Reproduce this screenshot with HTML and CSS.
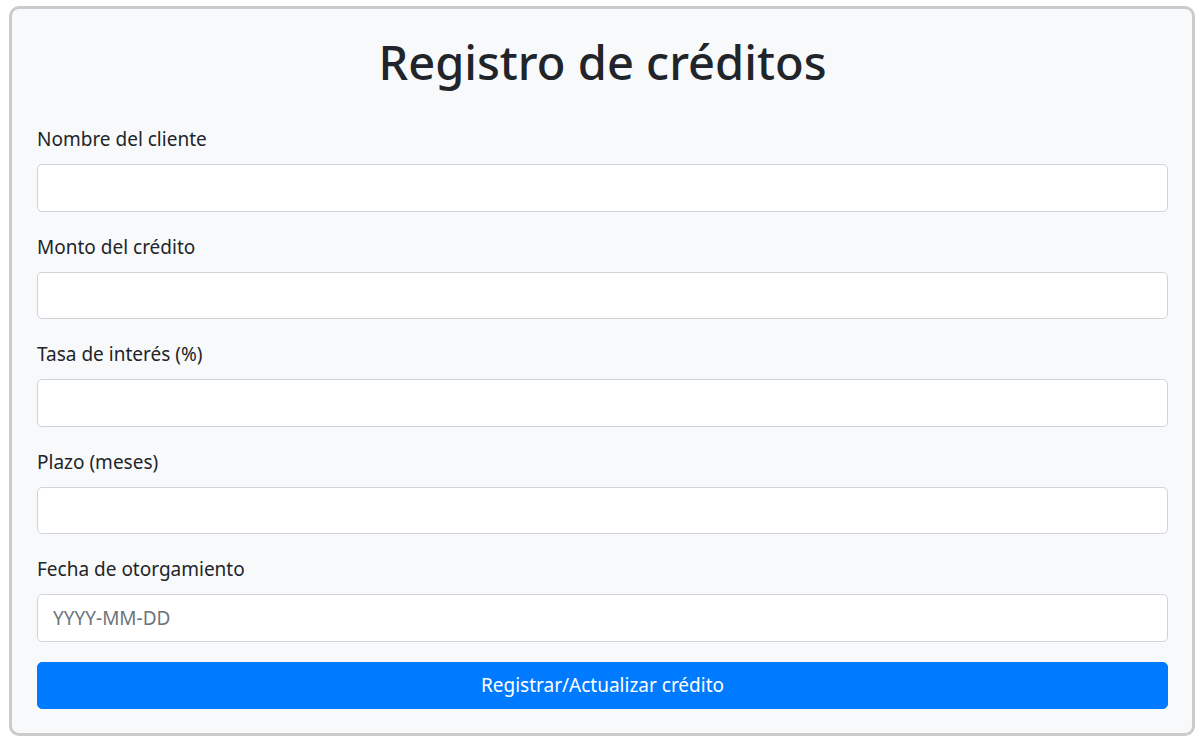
FILE: index.html
```html
<!DOCTYPE html>
<html lang="es">
<head>
<meta charset="utf-8">
<title>Registro de créditos</title>
<link rel="stylesheet" href="styles.css">
</head>
<body>
<div class="page">
  <div class="card">
    <h1 class="title">Registro de créditos</h1>
    <form class="form">
      <div class="group">
        <label class="label" for="nombre">Nombre del cliente</label>
        <input class="control" id="nombre" type="text">
      </div>
      <div class="group">
        <label class="label" for="monto">Monto del crédito</label>
        <input class="control" id="monto" type="text">
      </div>
      <div class="group">
        <label class="label" for="tasa">Tasa de interés (%)</label>
        <input class="control" id="tasa" type="text">
      </div>
      <div class="group">
        <label class="label" for="plazo">Plazo (meses)</label>
        <input class="control" id="plazo" type="text">
      </div>
      <div class="group">
        <label class="label" for="fecha">Fecha de otorgamiento</label>
        <input class="control" id="fecha" type="text" placeholder="YYYY-MM-DD">
      </div>
      <button class="btn" type="button">Registrar/Actualizar crédito</button>
    </form>
  </div>
</div>
</body>
</html>
```

FILE: styles.css
```css
* { box-sizing: border-box; }
html, body {
  margin: 0;
  padding: 0;
  background: #ffffff;
}
body {
  font-family: "Noto Sans", "Open Sans", "DejaVu Sans", sans-serif;
  color: #212529;
}
.page {
  padding: 6px 7px 6px 9px;
}
.card {
  background: #f8f9fa;
  border: 3px solid #cbcbcb;
  border-radius: 10px;
  padding: 23px 24px 24px 25px;
}
.title {
  margin: 0 0 32px;
  font-size: 47px;
  line-height: 60px;
  font-weight: 500;
  text-align: center;
  color: #212529;
}
.form {
  display: flex;
  flex-direction: column;
}
.group {
  display: flex;
  flex-direction: column;
  margin-bottom: 20px;
}
.label {
  font-size: 19px;
  line-height: 30px;
  margin-bottom: 10px;
  color: #212529;
}
.control {
  height: 47.5px;
  padding: 7px 15px;
  font-family: inherit;
  font-size: 19px;
  color: #495057;
  background: #ffffff;
  border: 1px solid #ced4da;
  border-radius: 5px;
  outline: none;
}
.control::placeholder {
  color: #6c757d;
  opacity: 1;
}
.btn {
  height: 47.5px;
  font-family: inherit;
  font-size: 19px;
  color: #ffffff;
  background: #007bff;
  border: 1px solid #007bff;
  border-radius: 5px;
  cursor: pointer;
}
```
